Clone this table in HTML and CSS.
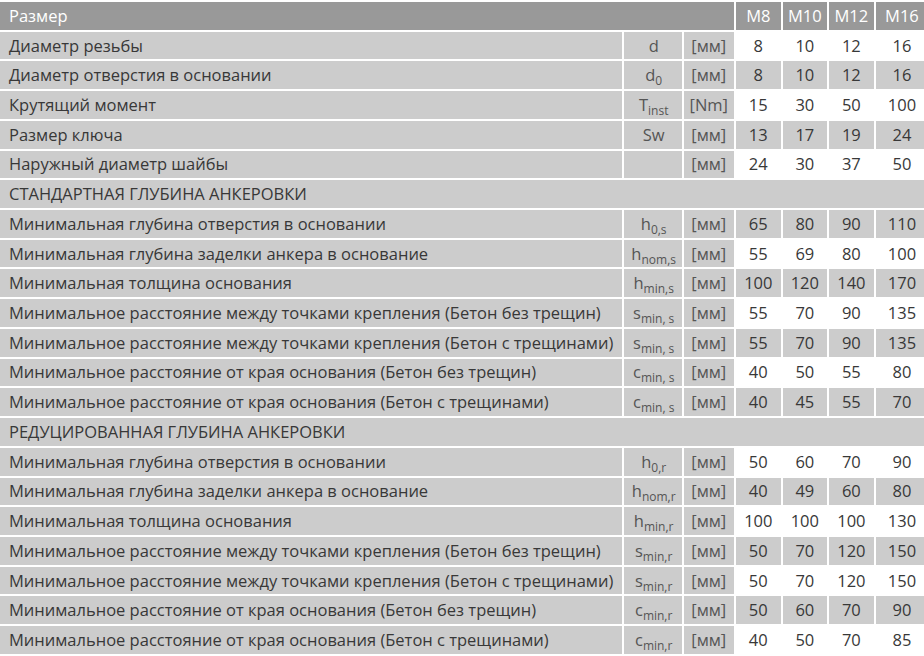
FILE: index.html
```html
<!DOCTYPE html>
<html lang="ru">
<head>
<meta charset="utf-8">
<link rel="stylesheet" href="styles.css">
</head>
<body>
<table class="spec">
  <colgroup>
    <col class="c-name"><col class="c-sym"><col class="c-unit">
    <col class="c-m8"><col class="c-m10"><col class="c-m12"><col class="c-m16">
  </colgroup>
  <thead>
    <tr class="head">
      <th colspan="3" class="title">Размер</th>
      <th>M8</th><th>M10</th><th>M12</th><th>M16</th>
    </tr>
  </thead>
  <tbody>
    <tr class="light"><td class="name">Диаметр резьбы</td><td class="sym">d</td><td class="unit">[мм]</td><td>8</td><td>10</td><td>12</td><td>16</td></tr>
    <tr class="dark"><td class="name">Диаметр отверстия в основании</td><td class="sym">d<sub>0</sub></td><td class="unit">[мм]</td><td>8</td><td>10</td><td>12</td><td>16</td></tr>
    <tr class="light"><td class="name">Крутящий момент</td><td class="sym">T<sub>inst</sub></td><td class="unit">[Nm]</td><td>15</td><td>30</td><td>50</td><td>100</td></tr>
    <tr class="dark"><td class="name">Размер ключа</td><td class="sym">Sw</td><td class="unit">[мм]</td><td>13</td><td>17</td><td>19</td><td>24</td></tr>
    <tr class="light"><td class="name">Наружный диаметр шайбы</td><td class="sym"></td><td class="unit">[мм]</td><td>24</td><td>30</td><td>37</td><td>50</td></tr>
    <tr class="section"><td colspan="7">СТАНДАРТНАЯ ГЛУБИНА АНКЕРОВКИ</td></tr>
    <tr class="dark"><td class="name">Минимальная глубина отверстия в основании</td><td class="sym">h<sub>0,s</sub></td><td class="unit">[мм]</td><td>65</td><td>80</td><td>90</td><td>110</td></tr>
    <tr class="light"><td class="name">Минимальная глубина заделки анкера в основание</td><td class="sym">h<sub>nom,s</sub></td><td class="unit">[мм]</td><td>55</td><td>69</td><td>80</td><td>100</td></tr>
    <tr class="dark"><td class="name">Минимальная толщина основания</td><td class="sym">h<sub>min,s</sub></td><td class="unit">[мм]</td><td>100</td><td>120</td><td>140</td><td>170</td></tr>
    <tr class="light"><td class="name">Минимальное расстояние между точками крепления (Бетон без трещин)</td><td class="sym">s<sub>min, s</sub></td><td class="unit">[мм]</td><td>55</td><td>70</td><td>90</td><td>135</td></tr>
    <tr class="dark"><td class="name">Минимальное расстояние между точками крепления (Бетон с трещинами)</td><td class="sym">s<sub>min, s</sub></td><td class="unit">[мм]</td><td>55</td><td>70</td><td>90</td><td>135</td></tr>
    <tr class="light"><td class="name">Минимальное расстояние от края основания (Бетон без трещин)</td><td class="sym">c<sub>min, s</sub></td><td class="unit">[мм]</td><td>40</td><td>50</td><td>55</td><td>80</td></tr>
    <tr class="dark"><td class="name">Минимальное расстояние от края основания (Бетон с трещинами)</td><td class="sym">c<sub>min, s</sub></td><td class="unit">[мм]</td><td>40</td><td>45</td><td>55</td><td>70</td></tr>
    <tr class="section"><td colspan="7">РЕДУЦИРОВАННАЯ ГЛУБИНА АНКЕРОВКИ</td></tr>
    <tr class="light"><td class="name">Минимальная глубина отверстия в основании</td><td class="sym">h<sub>0,r</sub></td><td class="unit">[мм]</td><td>50</td><td>60</td><td>70</td><td>90</td></tr>
    <tr class="dark"><td class="name">Минимальная глубина заделки анкера в основание</td><td class="sym">h<sub>nom,r</sub></td><td class="unit">[мм]</td><td>40</td><td>49</td><td>60</td><td>80</td></tr>
    <tr class="light"><td class="name">Минимальная толщина основания</td><td class="sym">h<sub>min,r</sub></td><td class="unit">[мм]</td><td>100</td><td>100</td><td>100</td><td>130</td></tr>
    <tr class="dark"><td class="name">Минимальное расстояние между точками крепления (Бетон без трещин)</td><td class="sym">s<sub>min,r</sub></td><td class="unit">[мм]</td><td>50</td><td>70</td><td>120</td><td>150</td></tr>
    <tr class="light"><td class="name">Минимальное расстояние между точками крепления (Бетон с трещинами)</td><td class="sym">s<sub>min,r</sub></td><td class="unit">[мм]</td><td>50</td><td>70</td><td>120</td><td>150</td></tr>
    <tr class="dark"><td class="name">Минимальное расстояние от края основания (Бетон без трещин)</td><td class="sym">c<sub>min,r</sub></td><td class="unit">[мм]</td><td>50</td><td>60</td><td>70</td><td>90</td></tr>
    <tr class="light"><td class="name">Минимальное расстояние от края основания (Бетон с трещинами)</td><td class="sym">c<sub>min,r</sub></td><td class="unit">[мм]</td><td>40</td><td>50</td><td>70</td><td>85</td></tr>
  </tbody>
</table>
</body>
</html>
```

FILE: styles.css
```css
html, body {
  margin: 0;
  padding: 0;
  background: #ffffff;
  overflow: hidden;
}

body {
  width: 924px;
  height: 656px;
  background: #e4e4e4;
}

.spec {
  table-layout: fixed;
  border-collapse: separate;
  border-spacing: 2px;
  width: 932px;
  margin: 0 0 0 -2px;
  background: #ffffff;
  font-family: "Open Sans", "Liberation Sans", sans-serif;
  font-size: 16.5px;
  font-weight: 400;
  color: #383838;
}

.c-name { width: 621px; }
.c-sym { width: 58px; }
.c-unit { width: 50px; }
.c-m8 { width: 45px; }
.c-m10 { width: 44px; }
.c-m12 { width: 45px; }
.c-m16 { width: 52px; }

.spec tr {
  height: 27.73px;
}

.spec th,
.spec td {
  padding: 0;
  text-align: center;
  vertical-align: middle;
  white-space: nowrap;
  background: #cccccc;
  line-height: 20px;
}

.head th {
  background: #999999;
  color: #ffffff;
  font-weight: 400;
  text-align: center;
}

.head th.title {
  text-align: left;
  padding-left: 9px;
}

.spec td.name {
  text-align: left;
  padding-left: 9px;
}

.spec td.sym,
.spec td.unit {
  color: #555555;
}

.spec td.sym {
  padding-left: 2px;
}

.spec sub {
  font-size: 12px;
  line-height: 0;
  vertical-align: -4px;
}

.light td {
  background: #ffffff;
}

.light td.name,
.light td.sym,
.light td.unit,
.dark td {
  background: #cccccc;
}

.section td {
  text-align: left;
  padding-left: 9px;
}
```
